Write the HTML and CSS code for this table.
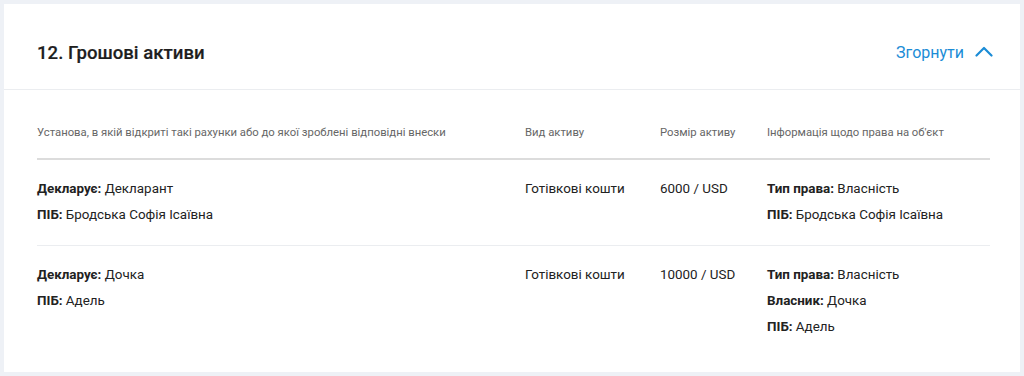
FILE: index.html
```html
<!DOCTYPE html>
<html lang="uk">
<head>
<meta charset="utf-8">
<link rel="stylesheet" href="styles.css">
</head>
<body>
<section class="card">
  <header class="card-head">
    <h2 class="title">12. Грошові активи</h2>
    <button class="toggle">Згорнути
      <svg class="chev" width="18" height="11" viewBox="0 0 18 11"><path d="M1.5 9.5 L9 2 L16.5 9.5" fill="none" stroke="currentColor" stroke-width="2.2" stroke-linecap="round" stroke-linejoin="round"/></svg>
    </button>
  </header>
  <div class="table">
    <div class="row head">
      <div>Установа, в якій відкриті такі рахунки або до якої зроблені відповідні внески</div>
      <div>Вид активу</div>
      <div>Розмір активу</div>
      <div>Інформація щодо права на об'єкт</div>
    </div>
    <div class="row">
      <div><p><b>Декларує:</b> Декларант</p><p><b>ПІБ:</b> Бродська Софія Ісаївна</p></div>
      <div><p>Готівкові кошти</p></div>
      <div><p>6000 / USD</p></div>
      <div><p><b>Тип права:</b> Власність</p><p><b>ПІБ:</b> Бродська Софія Ісаївна</p></div>
    </div>
    <div class="row last">
      <div><p><b>Декларує:</b> Дочка</p><p><b>ПІБ:</b> Адель</p></div>
      <div><p>Готівкові кошти</p></div>
      <div><p>10000 / USD</p></div>
      <div><p><b>Тип права:</b> Власність</p><p><b>Власник:</b> Дочка</p><p><b>ПІБ:</b> Адель</p></div>
    </div>
  </div>
</section>
</body>
</html>
```

FILE: styles.css
```css
html, body {
  margin: 0;
  padding: 0;
  background: #eef1f6;
  font-family: Roboto, "Liberation Sans", sans-serif;
  color: #222;
}
body {
  padding: 4px 4px 0 4px;
}
.card {
  background: #fff;
  height: 368px;
  box-sizing: border-box;
}
.card-head {
  display: flex;
  align-items: center;
  justify-content: space-between;
  height: 86px;
  padding: 12px 27px 0 33px;
  box-sizing: border-box;
  border-bottom: 1px solid #ebedf0;
}
.title {
  margin: 0;
  font-size: 18.6px;
  font-weight: 500;
  color: #1e1e1e;
  -webkit-text-stroke: 0.2px #1e1e1e;
}
.toggle {
  display: flex;
  align-items: center;
  gap: 11px;
  background: none;
  border: 0;
  padding: 0;
  font-family: inherit;
  font-size: 16px;
  color: #1b8cd6;
}
.chev {
  display: block;
  margin-top: -2px;
}
.table {
  padding: 0 30px 0 33px;
}
.row {
  display: grid;
  grid-template-columns: 488px 135px 107px 1fr;
  border-bottom: 1px solid #ebedf0;
  padding: 16px 0 17px;
  font-size: 13.4px;
  color: #222;
}
.row p {
  margin: 0;
  line-height: 26px;
}
.row b {
  font-weight: 700;
}
.row.head {
  font-size: 11.3px;
  color: #666;
  line-height: 16px;
  padding: 35px 0 17px;
  border-bottom: 2px solid #dcdcdc;
}
.row.last {
  border-bottom: 0;
  padding-top: 16px;
}
```
